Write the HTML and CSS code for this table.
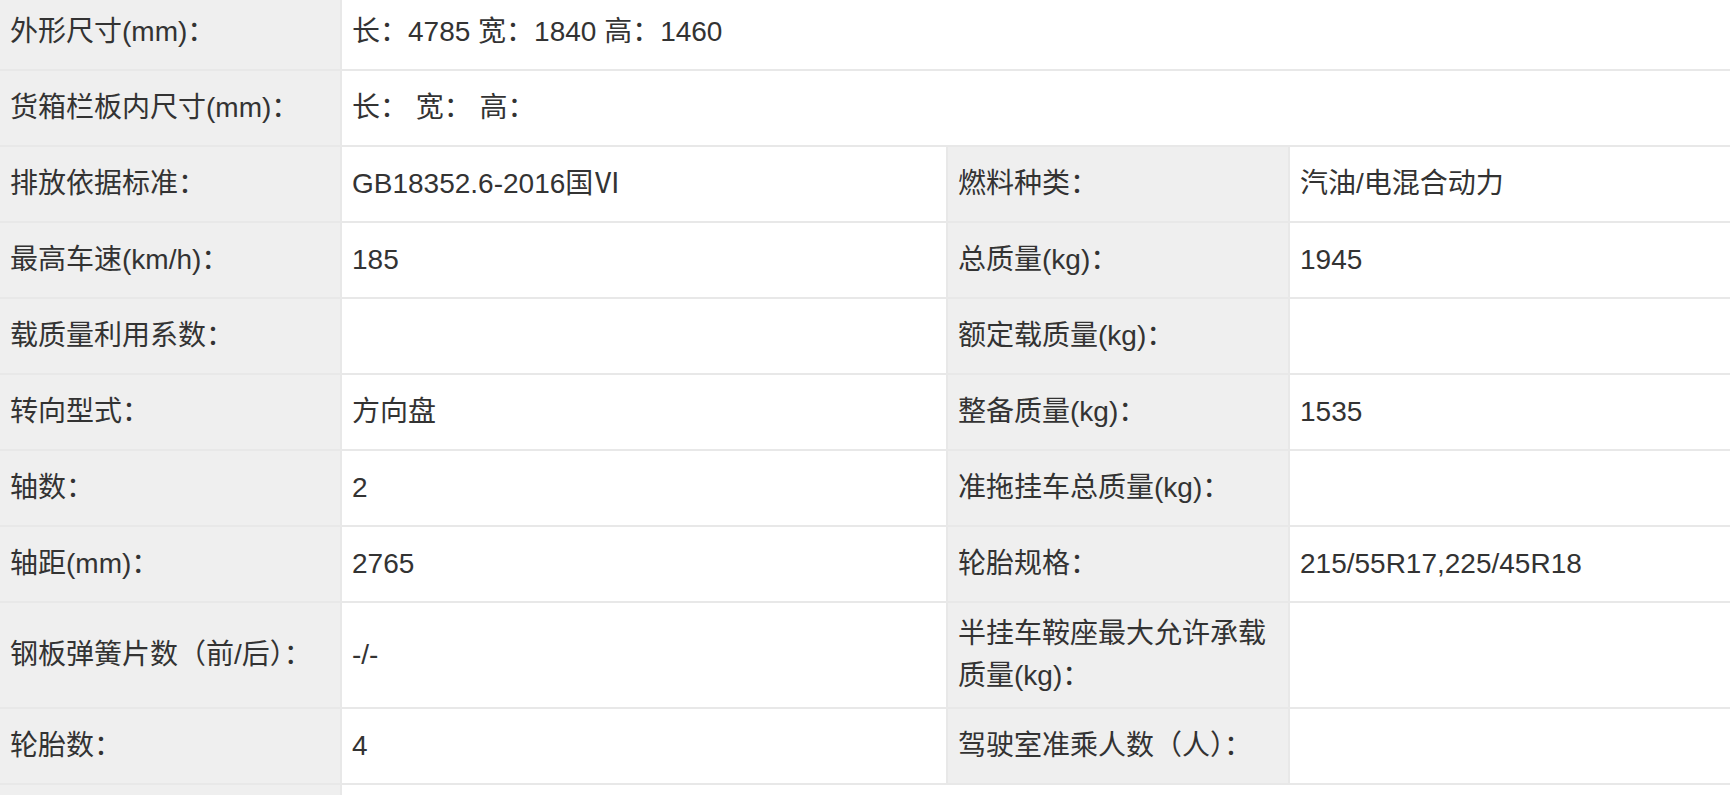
FILE: index.html
```
<!DOCTYPE html>
<html lang="zh-CN">
<head>
<meta charset="utf-8">
<title>车辆参数</title>
<link rel="stylesheet" href="styles.css">
</head>
<body>
<div class="spec">
  <div class="lbl">外形尺寸(mm)：</div>
  <div class="val wide">长：4785 宽：1840 高：1460</div>

  <div class="lbl">货箱栏板内尺寸(mm)：</div>
  <div class="val wide">长： 宽： 高：</div>

  <div class="lbl">排放依据标准：</div>
  <div class="val">GB18352.6-2016国Ⅵ</div>
  <div class="lbl">燃料种类：</div>
  <div class="val">汽油/电混合动力</div>

  <div class="lbl">最高车速(km/h)：</div>
  <div class="val">185</div>
  <div class="lbl">总质量(kg)：</div>
  <div class="val">1945</div>

  <div class="lbl">载质量利用系数：</div>
  <div class="val"></div>
  <div class="lbl">额定载质量(kg)：</div>
  <div class="val"></div>

  <div class="lbl">转向型式：</div>
  <div class="val">方向盘</div>
  <div class="lbl">整备质量(kg)：</div>
  <div class="val">1535</div>

  <div class="lbl">轴数：</div>
  <div class="val">2</div>
  <div class="lbl">准拖挂车总质量(kg)：</div>
  <div class="val"></div>

  <div class="lbl">轴距(mm)：</div>
  <div class="val">2765</div>
  <div class="lbl">轮胎规格：</div>
  <div class="val">215/55R17,225/45R18</div>

  <div class="lbl">钢板弹簧片数（前/后）：</div>
  <div class="val">-/-</div>
  <div class="lbl">半挂车鞍座最大允许承载质量(kg)：</div>
  <div class="val"></div>

  <div class="lbl">轮胎数：</div>
  <div class="val">4</div>
  <div class="lbl">驾驶室准乘人数（人）：</div>
  <div class="val"></div>

  <div class="lbl"></div>
  <div class="val wide"></div>
</div>
</body>
</html>
```

FILE: styles.css
```
html, body {
  margin: 0;
  padding: 0;
  background: #ffffff;
}

body {
  font-family: "Liberation Sans", "Noto Sans CJK SC", sans-serif;
  font-size: 28px;
  color: #333333;
}

.spec {
  display: grid;
  grid-template-columns: 340px 604px 340px 1fr;
  grid-auto-rows: minmax(74px, auto);
  gap: 2px;
  background: #e8e8e8;
  margin-top: -5px;
}

.lbl,
.val {
  display: flex;
  align-items: center;
  box-sizing: border-box;
  padding: 10px 10px;
  line-height: 42px;
}

.lbl {
  background: #efefef;
}

.val {
  background: #ffffff;
}

.wide {
  grid-column: span 3;
}
```
